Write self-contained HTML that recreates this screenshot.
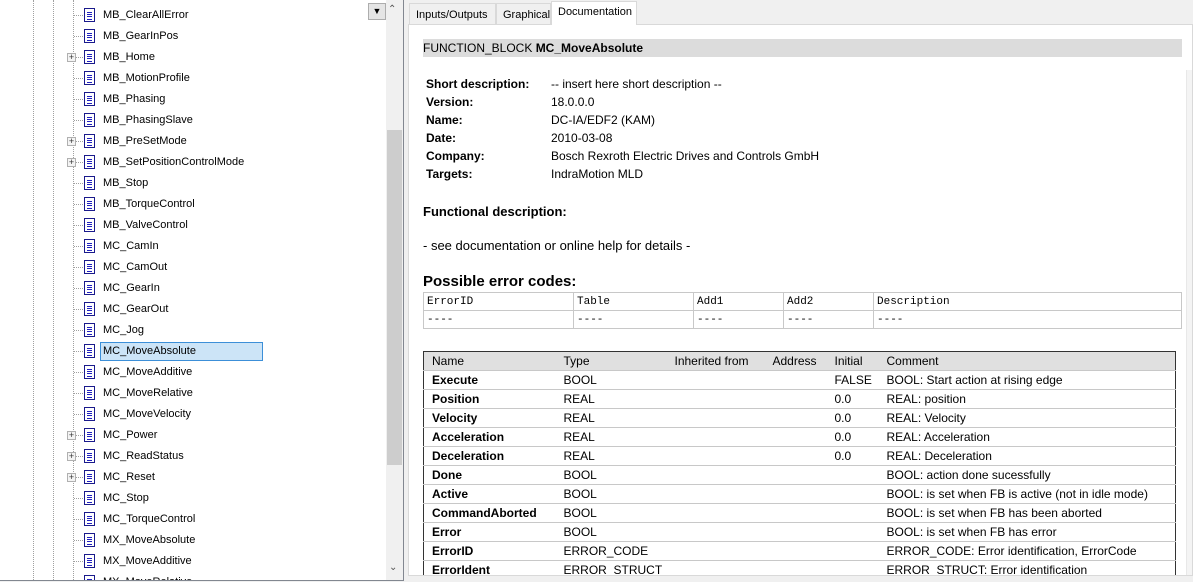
<!DOCTYPE html>
<html><head><meta charset="utf-8"><style>
*{margin:0;padding:0;box-sizing:border-box}
html,body{width:1193px;height:582px;overflow:hidden}
body{background:#f0f0f0;font-family:"Liberation Sans",Arial,sans-serif;font-size:12px;color:#000;position:relative}
.abs{position:absolute}
#left{left:0;top:0;width:404px;height:581px;background:#fff;border:1px solid #828790;border-top:none;border-left:none;overflow:hidden}
.vl{position:absolute;top:0;height:582px;border-left:1px dotted #a0a0a0}
#rows{position:absolute;left:0;top:2px;width:390px;height:582px}
.row{position:absolute;left:0;height:21px;width:380px}
.row .h{position:absolute;left:74px;top:10px;width:9px;border-top:1px dotted #a0a0a0}
.row .ic{position:absolute;left:84px;top:3px;width:11px;height:14px;border:1px solid #1a1a8c;background:#fff}
.row .ic:before{content:"";position:absolute;left:2px;top:3px;width:5px;height:6px;border-top:1px solid #2020c0;border-bottom:1px solid #2020c0}
.row .ic:after{content:"";position:absolute;left:2px;top:5px;width:5px;height:1px;background:#2020c0;box-shadow:0 2px 0 #2020c0}
.row .t{position:absolute;left:103px;top:4px;font-size:11px;white-space:nowrap}
.row .p{position:absolute;left:67px;top:6px;width:9px;height:9px;border:1px solid #b0b0b0;background:#f4f4f4;font-size:9px;line-height:7px;text-align:center;color:#333}
.sel{position:absolute;left:100px;top:1px;width:163px;height:19px;background:#cce4f7;border:1px solid #3c8fd8}
#right{left:408px;top:0;width:785px;height:582px}
.tab{position:absolute;top:3px;height:21px;border:1px solid #d9d9d9;border-bottom:none;background:#f0f0f0;font-size:11px;padding:5px 0 0 6px}
#doc{position:absolute;left:0;top:24px;width:785px;height:552px;background:#fff;border:1px solid #d9d9d9;overflow:hidden}
.lab{position:absolute;left:17px;font-weight:bold}
.val{position:absolute;left:142px}
table{border-collapse:collapse}
.et td{border:1px solid #c8c8c8;font-family:"Liberation Mono",monospace;font-size:11px;height:18px;padding:2px 3px;vertical-align:middle}
.vt{position:absolute;left:14px;top:326px;width:753px;border:1px solid #333;}
.vt td{height:19px;padding:0 0 0 8px;border-bottom:1px solid #c8c8c8;white-space:nowrap;font-size:12px}
.vt tr.hd td{background:#e0e0e0;height:19px}
</style></head><body>
<div id="left" class="abs">
<div class="vl" style="left:33px"></div><div class="vl" style="left:53px"></div><div class="vl" style="left:73px"></div>
<div id="rows">
<div class="row" style="top:3px"><div class="h"></div><div class="ic"></div><div class="t">MB_ClearAllError</div></div>
<div class="row" style="top:24px"><div class="h"></div><div class="ic"></div><div class="t">MB_GearInPos</div></div>
<div class="row" style="top:45px"><div class="h"></div><div class="p">+</div><div class="ic"></div><div class="t">MB_Home</div></div>
<div class="row" style="top:66px"><div class="h"></div><div class="ic"></div><div class="t">MB_MotionProfile</div></div>
<div class="row" style="top:87px"><div class="h"></div><div class="ic"></div><div class="t">MB_Phasing</div></div>
<div class="row" style="top:108px"><div class="h"></div><div class="ic"></div><div class="t">MB_PhasingSlave</div></div>
<div class="row" style="top:129px"><div class="h"></div><div class="p">+</div><div class="ic"></div><div class="t">MB_PreSetMode</div></div>
<div class="row" style="top:150px"><div class="h"></div><div class="p">+</div><div class="ic"></div><div class="t">MB_SetPositionControlMode</div></div>
<div class="row" style="top:171px"><div class="h"></div><div class="ic"></div><div class="t">MB_Stop</div></div>
<div class="row" style="top:192px"><div class="h"></div><div class="ic"></div><div class="t">MB_TorqueControl</div></div>
<div class="row" style="top:213px"><div class="h"></div><div class="ic"></div><div class="t">MB_ValveControl</div></div>
<div class="row" style="top:234px"><div class="h"></div><div class="ic"></div><div class="t">MC_CamIn</div></div>
<div class="row" style="top:255px"><div class="h"></div><div class="ic"></div><div class="t">MC_CamOut</div></div>
<div class="row" style="top:276px"><div class="h"></div><div class="ic"></div><div class="t">MC_GearIn</div></div>
<div class="row" style="top:297px"><div class="h"></div><div class="ic"></div><div class="t">MC_GearOut</div></div>
<div class="row" style="top:318px"><div class="h"></div><div class="ic"></div><div class="t">MC_Jog</div></div>
<div class="row" style="top:339px"><div class="h"></div><div class="sel"></div><div class="ic"></div><div class="t">MC_MoveAbsolute</div></div>
<div class="row" style="top:360px"><div class="h"></div><div class="ic"></div><div class="t">MC_MoveAdditive</div></div>
<div class="row" style="top:381px"><div class="h"></div><div class="ic"></div><div class="t">MC_MoveRelative</div></div>
<div class="row" style="top:402px"><div class="h"></div><div class="ic"></div><div class="t">MC_MoveVelocity</div></div>
<div class="row" style="top:423px"><div class="h"></div><div class="p">+</div><div class="ic"></div><div class="t">MC_Power</div></div>
<div class="row" style="top:444px"><div class="h"></div><div class="p">+</div><div class="ic"></div><div class="t">MC_ReadStatus</div></div>
<div class="row" style="top:465px"><div class="h"></div><div class="p">+</div><div class="ic"></div><div class="t">MC_Reset</div></div>
<div class="row" style="top:486px"><div class="h"></div><div class="ic"></div><div class="t">MC_Stop</div></div>
<div class="row" style="top:507px"><div class="h"></div><div class="ic"></div><div class="t">MC_TorqueControl</div></div>
<div class="row" style="top:528px"><div class="h"></div><div class="ic"></div><div class="t">MX_MoveAbsolute</div></div>
<div class="row" style="top:549px"><div class="h"></div><div class="ic"></div><div class="t">MX_MoveAdditive</div></div>
<div class="row" style="top:570px"><div class="h"></div><div class="ic"></div><div class="t">MX_MoveRelative</div></div>
</div>
<div class="abs" style="left:368px;top:3px;width:18px;height:17px;background:#e5e5e5;border:1px solid #adadad;font-size:9px;text-align:center;line-height:15px">▼</div>
<div class="abs" style="left:386px;top:0;width:17px;height:582px;background:#f0f0f0"></div>
<div class="abs" style="left:387px;top:130px;width:15px;height:335px;background:#cdcdcd"></div>
<div class="abs" style="left:388px;top:4px;font-size:10px;color:#555">&#8963;</div>
<div class="abs" style="left:389px;top:562px;font-size:10px;color:#555">&#8964;</div>
</div>
<div id="right" class="abs">
<div class="tab" style="left:1px;width:87px">Inputs/Outputs</div>
<div class="tab" style="left:88px;width:55px">Graphical</div>
<div class="tab" style="left:143px;top:1px;height:24px;width:86px;background:#fff;padding-top:4px;z-index:2">Documentation</div>
<div id="doc">
<div class="abs" style="left:14px;top:14px;width:759px;height:18px;background:#dcdcdc;font-size:12px;padding:2px 0 0 0">FUNCTION_BLOCK <b>MC_MoveAbsolute</b></div>
<div class="lab" style="top:52px">Short description:</div><div class="val" style="top:52px">-- insert here short description --</div>
<div class="lab" style="top:70px">Version:</div><div class="val" style="top:70px">18.0.0.0</div>
<div class="lab" style="top:88px">Name:</div><div class="val" style="top:88px">DC-IA/EDF2 (KAM)</div>
<div class="lab" style="top:106px">Date:</div><div class="val" style="top:106px">2010-03-08</div>
<div class="lab" style="top:124px">Company:</div><div class="val" style="top:124px">Bosch Rexroth Electric Drives and Controls GmbH</div>
<div class="lab" style="top:142px">Targets:</div><div class="val" style="top:142px">IndraMotion MLD</div>
<div class="abs" style="left:14px;top:179px;font-weight:bold;font-size:13px">Functional description:</div>
<div class="abs" style="left:14px;top:213px;font-size:13px">- see documentation or online help for details -</div>
<div class="abs" style="left:14px;top:248px;font-weight:bold;font-size:15px">Possible error codes:</div>
<table class="et abs" style="left:14px;top:267px;width:759px;border:1px solid #c8c8c8">
<tr><td style="width:150px">ErrorID</td><td style="width:120px">Table</td><td style="width:90px">Add1</td><td style="width:90px">Add2</td><td>Description</td></tr>
<tr><td>----</td><td>----</td><td>----</td><td>----</td><td>----</td></tr></table>
<table class="vt">
<tr class="hd"><td style="width:132px">Name</td><td style="width:111px">Type</td><td style="width:98px">Inherited from</td><td style="width:62px">Address</td><td style="width:52px">Initial</td><td>Comment</td></tr>
<tr><td><b>Execute</b></td><td>BOOL</td><td></td><td></td><td>FALSE</td><td>BOOL: Start action at rising edge</td></tr>
<tr><td><b>Position</b></td><td>REAL</td><td></td><td></td><td>0.0</td><td>REAL: position</td></tr>
<tr><td><b>Velocity</b></td><td>REAL</td><td></td><td></td><td>0.0</td><td>REAL: Velocity</td></tr>
<tr><td><b>Acceleration</b></td><td>REAL</td><td></td><td></td><td>0.0</td><td>REAL: Acceleration</td></tr>
<tr><td><b>Deceleration</b></td><td>REAL</td><td></td><td></td><td>0.0</td><td>REAL: Deceleration</td></tr>
<tr><td><b>Done</b></td><td>BOOL</td><td></td><td></td><td></td><td>BOOL: action done sucessfully</td></tr>
<tr><td><b>Active</b></td><td>BOOL</td><td></td><td></td><td></td><td>BOOL: is set when FB is active (not in idle mode)</td></tr>
<tr><td><b>CommandAborted</b></td><td>BOOL</td><td></td><td></td><td></td><td>BOOL: is set when FB has been aborted</td></tr>
<tr><td><b>Error</b></td><td>BOOL</td><td></td><td></td><td></td><td>BOOL: is set when FB has error</td></tr>
<tr><td><b>ErrorID</b></td><td>ERROR_CODE</td><td></td><td></td><td></td><td>ERROR_CODE: Error identification, ErrorCode</td></tr>
<tr><td><b>ErrorIdent</b></td><td>ERROR_STRUCT</td><td></td><td></td><td></td><td>ERROR_STRUCT: Error identification</td></tr>
</table>
<div class="abs" style="left:777px;top:45px;width:7px;height:506px;background:#f4f4f4;border-left:1px solid #e8e8e8"></div>
</div>
</div>
</body></html>
